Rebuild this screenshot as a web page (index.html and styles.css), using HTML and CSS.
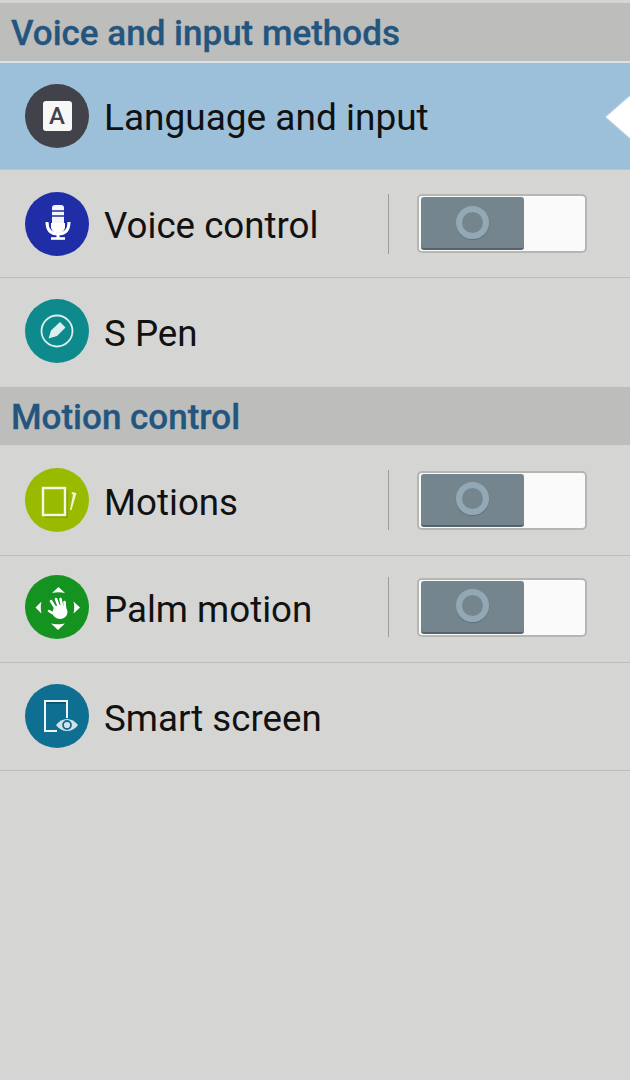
FILE: index.html
```html
<!DOCTYPE html>
<html lang="en">
<head>
    <meta charset="UTF-8">
    <meta name="viewport" content="width=device-width, initial-scale=1.0">
    <title>Settings</title>
    <link rel="stylesheet" href="styles.css">
</head>
<body>
    <div class="container">
        <div class="section-header first">Voice and input methods</div>

        <div class="row selected">
            <div class="icon icon-language"><span class="key-a">A</span></div>
            <div class="row-label">Language and input</div>
            <div class="selected-arrow"></div>
        </div>

        <div class="row">
            <div class="icon icon-voice">
                <svg viewBox="0 0 64 64" width="64" height="64">
                    <path d="M27 32V16c0-2 1-3 3-3h6c2 0 3 1 3 3v16z" fill="#f4f5fb"/>
                    <path d="M27 19h12M27 24h12" stroke="#1f2ea6" stroke-width="1.5"/>
                    <path d="M22 30c0 3 0 12 11 12s11-9 11-12" fill="none" stroke="#fff" stroke-width="3"/>
                    <path d="M26 31h14v4c0 3-3 6-7 6s-7-3-7-6z" fill="#fff"/>
                    <path d="M33 42v4" stroke="#fff" stroke-width="3"/>
                    <path d="M26 46.500h14" stroke="#fff" stroke-width="2.600"/>
                </svg>
            </div>
            <div class="row-label">Voice control</div>
            <div class="divider"></div>
            <div class="toggle"><div class="toggle-thumb"><span class="toggle-ring"></span></div></div>
        </div>

        <div class="row row-pen">
            <div class="icon icon-pen">
                <svg viewBox="0 0 64 64" width="64" height="64">
                    <circle cx="32" cy="32" r="15.500" fill="none" stroke="#dcefee" stroke-width="1.800"/>
                    <path d="M23.500 39.500l2.500-8 9-8.500 5.500 5.500-8.500 8.500z" fill="#dcefee"/>
                </svg>
            </div>
            <div class="row-label">S Pen</div>
        </div>

        <div class="section-header">Motion control</div>

        <div class="row row-motions">
            <div class="icon icon-motions">
                <svg viewBox="0 0 64 64" width="64" height="64">
                    <rect x="20" y="22" width="23" height="28" fill="#7f9c00" opacity="0.700"/>
                    <rect x="18" y="20" width="22" height="27" fill="#98bb00" stroke="#f4f8e2" stroke-width="2.400"/>
                    <path d="M47 24l4.500 1-5 17h-1.500l3-15.500-1.500-.5z" fill="#eef4cf"/>
                </svg>
            </div>
            <div class="row-label">Motions</div>
            <div class="divider"></div>
            <div class="toggle"><div class="toggle-thumb"><span class="toggle-ring"></span></div></div>
        </div>

        <div class="row row-palm">
            <div class="icon icon-palm">
                <svg viewBox="0 0 64 64" width="64" height="64">
                    <path d="M33.500 12l6.500 6c-4-1-9-1-13 0zM33 55l-7-6.500c4 1 10 1 14 0zM10.500 32.500l6-6c-1 4-1 8 0 12zM55 32.500l-6.500 6c1-4 1-8 0-12z" fill="#fff"/>
                    <g stroke="#fff" stroke-width="2.600" stroke-linecap="round">
                        <path d="M31 34l-5-8M34 32l-3-8M37 31l-1.500-7M40 33l-.5-6M29 39l-5-3"/>
                    </g>
                    <ellipse cx="35" cy="37" rx="7.500" ry="7" fill="#fff"/>
                </svg>
            </div>
            <div class="row-label">Palm motion</div>
            <div class="divider"></div>
            <div class="toggle"><div class="toggle-thumb"><span class="toggle-ring"></span></div></div>
        </div>

        <div class="row row-smart">
            <div class="icon icon-smart">
                <svg viewBox="0 0 64 64" width="64" height="64">
                    <path d="M32 47H20V17h22v17" fill="none" stroke="#eef5f7" stroke-width="2"/>
                    <path d="M21 18.800h20" stroke="#0b4f6c" stroke-width="1.500"/>
                    <path d="M31 41c3-4 7-6 11-6s8 2 11 6c-3 4-7 6-11 6s-8-2-11-6z" fill="#d3e2e8"/>
                    <circle cx="42" cy="41" r="4" fill="none" stroke="#0f6f92" stroke-width="1.800"/>
                </svg>
            </div>
            <div class="row-label">Smart screen</div>
        </div>
    </div>
</body>
</html>
```

FILE: styles.css
```css
* {
    margin: 0;
    padding: 0;
    box-sizing: border-box;
}

body {
    font-family: Roboto, 'Liberation Sans', sans-serif;
    background: #d5d5d3;
    color: #111;
    min-height: 100vh;
}

.container {
    width: 630px;
    height: 1080px;
    overflow: hidden;
}

.section-header {
    height: 60px;
    padding: 2px 0 0 11px;
    display: flex;
    align-items: center;
    background: #bdbdbb;
    border-top: 1px solid #d5d5d3;
    border-bottom: 1px solid #d5d5d3;
    color: #23557f;
    font-size: 35px;
    font-weight: 500;
    -webkit-text-stroke: 0.3px #23557f;
}

.section-header.first {
    height: 63px;
    border-top: 3px solid #d5d5d3;
    border-bottom: 2px solid #d9e2e6;
}

.row {
    height: 108px;
    display: flex;
    align-items: center;
    padding-left: 25px;
    border-bottom: 1px solid #bcbcba;
    position: relative;
}

.row.selected {
    height: 107px;
    background: #9cc0da;
    border-bottom: 1px solid #b9c4cb;
}

.row-pen {
    padding-bottom: 2px;
    border-bottom: none;
}

.row-motions {
    height: 110px;
    padding-bottom: 1px;
}

.row-palm {
    height: 107px;
    padding-bottom: 4px;
}

.row-smart {
    padding-bottom: 1px;
}

.icon {
    width: 64px;
    height: 64px;
    border-radius: 50%;
    flex: none;
    display: flex;
    align-items: center;
    justify-content: center;
}

.icon-language { background: #42424a; }
.icon-voice { background: #1f2ea6; }
.icon-pen { background: #0e8a8c; }
.icon-motions { background: #98bb00; }
.icon-palm { background: #149320; }
.icon-smart { background: #0f6f92; }

.key-a {
    width: 29px;
    height: 30px;
    background: #f7f7f7;
    border-radius: 3px;
    color: #42424a;
    font-size: 24px;
    font-weight: 500;
    line-height: 30px;
    text-align: center;
}

.row-label {
    margin-left: 15px;
    padding-top: 4px;
    font-size: 36.7px;
    flex: 1;
}

.selected .row-label {
    padding-top: 2px;
    font-size: 37px;
}

.selected-arrow {
    position: absolute;
    right: 0;
    top: 33px;
    width: 0;
    height: 0;
    border-top: 21px solid transparent;
    border-bottom: 21px solid transparent;
    border-right: 24px solid #fff;
    filter: drop-shadow(0 0 1px #d5e4ee);
}

.divider {
    width: 1px;
    height: 60px;
    background: #9d9d9b;
    flex: none;
}

.toggle {
    width: 170px;
    height: 59px;
    margin-left: 28px;
    margin-right: 43px;
    flex: none;
    background: #fafafa;
    border: 2px solid #b5b5b3;
    border-radius: 5px;
    padding: 1px 1px 1px 2px;
}

.toggle-thumb {
    width: 103px;
    height: 53px;
    background: #74858e;
    border-bottom: 2px solid #57636a;
    border-radius: 3px;
    display: flex;
    align-items: center;
    justify-content: center;
}

.toggle-ring {
    width: 33px;
    height: 33px;
    border-radius: 50%;
    border: 6px solid #92a9b5;
    margin-bottom: 1px;
    box-shadow: 0 1px 1px #5f6d75;
}
```
